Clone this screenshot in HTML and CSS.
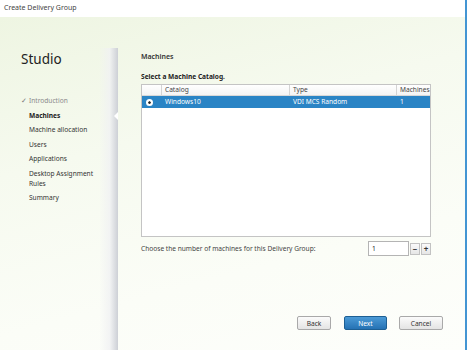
FILE: index.html
```html
<!DOCTYPE html>
<html lang="en">

<head>
    <meta charset="UTF-8" />
    <title>Create Delivery Group</title>
    <link rel="stylesheet" href="styles.css">
</head>

<body>
    <div class="frame">
        <div class="titlebar">Create Delivery Group</div>

        <div class="window">
            <aside class="sidebar">
                <div class="side-panel">
                    <h1>Studio</h1>
                    <ul class="steps">
                        <li class="done"><span class="check">✓</span>Introduction</li>
                        <li class="active">Machines</li>
                        <li>Machine allocation</li>
                        <li>Users</li>
                        <li>Applications</li>
                        <li>Desktop Assignment<br>Rules</li>
                        <li>Summary</li>
                    </ul>
                </div>
            </aside>

            <main class="content">
                <h2>Machines</h2>
                <p class="lead">Select a Machine Catalog.</p>

                <div class="grid">
                    <div class="row head">
                        <div class="cell sel"></div>
                        <div class="cell cat">Catalog</div>
                        <div class="cell type">Type</div>
                        <div class="cell num">Machines</div>
                    </div>
                    <div class="row selected">
                        <div class="cell sel"><span class="radio"></span></div>
                        <div class="cell cat">Windows10</div>
                        <div class="cell type">VDI MCS Random</div>
                        <div class="cell num">1</div>
                    </div>
                </div>

                <div class="count">
                    <span>Choose the number of machines for this Delivery Group:</span>
                    <div class="spinner">
                        <input type="text" value="1">
                        <button class="step">&minus;</button>
                        <button class="step">+</button>
                    </div>
                </div>

                <div class="actions">
                    <button class="btn">Back</button>
                    <button class="btn primary">Next</button>
                    <button class="btn cancel">Cancel</button>
                </div>
            </main>
        </div>
    </div>
</body>

</html>
```

FILE: styles.css
```css
:root {
    --text: #333;
    --muted: #8a8a8a;
    --blue: #2a84c5;
    --line: #c4c4c4
}

* {
    box-sizing: border-box
}

body {
    margin: 0;
    font-family: "Noto Sans", "Open Sans", sans-serif;
    font-size: 6.6px;
    color: var(--text)
}

.frame {
    width: 467px;
    height: 350px;
    border-right: 2px solid #4395d3;
    display: flex;
    flex-direction: column;
    overflow: hidden
}

.titlebar {
    height: 17px;
    line-height: 16px;
    padding-left: 4px;
    font-size: 7px;
    background: #fff;
    color: #444
}

.window {
    flex: 1;
    display: flex;
    background: linear-gradient(165deg, #eef5e2 0%, #f6faef 35%, #fbfdf7 70%, #fdfefb 100%)
}

.sidebar {
    width: 118px;
    padding-top: 31px;
    display: flex;
    flex-direction: column
}

.side-panel {
    flex: 1;
    padding: 2px 0 0 21px;
    background: linear-gradient(to right, rgba(255, 255, 255, 0) 84%, rgba(240, 241, 243, .8) 93%, #cdd0d6 100%)
}

h1 {
    margin: 0 0 28px;
    font-size: 13.5px;
    font-weight: 400;
    line-height: 18px;
    color: #222
}

.steps {
    list-style: none;
    margin: 0;
    padding: 0
}

.steps li {
    position: relative;
    padding-left: 8px;
    line-height: 10px;
    margin-bottom: 4.5px;
    white-space: nowrap
}

.steps .done {
    color: var(--muted);
    padding-left: 0
}

.check {
    display: inline-block;
    width: 8px;
    color: #777
}

.steps .active {
    font-weight: 700;
    color: #222
}

.steps .active::after {
    content: "";
    position: absolute;
    left: 93px;
    top: 1px;
    border: 4px solid transparent;
    border-right-color: #fff;
    border-left: 0
}

.content {
    flex: 1;
    padding: 35px 0 0 23px;
    display: flex;
    flex-direction: column
}

h2 {
    margin: 0;
    font-size: 7px;
    font-weight: 600;
    line-height: 10px;
    color: #333
}

.lead {
    margin: 10px 0 2px;
    font-weight: 700;
    line-height: 10px;
    color: #222
}

.grid {
    width: 290px;
    height: 153px;
    border: 1px solid var(--line);
    background: #fff
}

.row {
    display: flex;
    height: 11px;
    line-height: 10px
}

.head {
    background: linear-gradient(#fff, #f4f4f4);
    border-bottom: 1px solid #d8d8d8;
    color: #444
}

.head .cell {
    border-right: 1px solid #d4d4d4;
    padding-left: 3px
}

.head .num {
    border-right: 0
}

.cell {
    padding-left: 3px;
    overflow: hidden;
    white-space: nowrap
}

.sel {
    width: 20px
}

.cat {
    width: 128px
}

.type {
    width: 107px
}

.num {
    flex: 1
}

.selected {
    height: 12px;
    line-height: 12px;
    background: var(--blue);
    color: #fff
}

.selected .sel {
    display: flex;
    align-items: center;
    padding-left: 4px
}

.radio {
    width: 7px;
    height: 7px;
    border-radius: 50%;
    background: #fff;
    border: 2px solid #fff;
    box-shadow: inset 0 0 0 4px #222
}

.count {
    display: flex;
    align-items: center;
    justify-content: space-between;
    width: 290px;
    margin-top: 4px;
    color: #444
}

.spinner {
    display: flex;
    align-items: center
}

.spinner input {
    width: 41px;
    height: 15px;
    border: 1px solid #b4b4b4;
    font: inherit;
    padding: 0 3px;
    color: #222;
    background: #fff
}

.step {
    width: 10px;
    height: 12px;
    margin-left: 1px;
    padding: 0;
    border: 1px solid #c2c2c2;
    background: linear-gradient(#fafafa, #e6e6e6);
    font: 700 8px/10px "Noto Sans", sans-serif;
    color: #333
}

.actions {
    margin-top: auto;
    margin-bottom: 20px;
    display: flex;
    padding-left: 156px
}

.btn {
    width: 34px;
    height: 14px;
    padding: 0;
    border: 1px solid #a9a9a9;
    border-radius: 2px;
    background: linear-gradient(#fbfbfb, #e4e4e4);
    font: inherit;
    color: #333
}

.primary {
    width: 43px;
    margin-left: 13px;
    border-color: #1d5f93;
    background: linear-gradient(#4b9ad6, #2572b4);
    color: #fff
}

.cancel {
    width: 44px;
    margin-left: 12px
}
```
